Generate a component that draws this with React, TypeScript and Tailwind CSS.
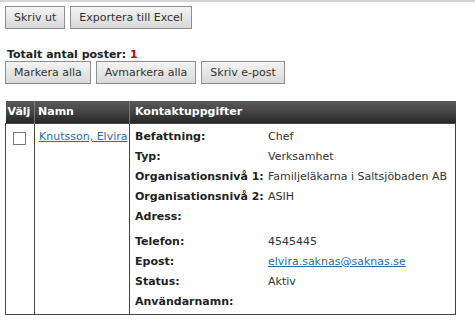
import React from 'react';

const font = { fontFamily: '"DejaVu Sans", Verdana, sans-serif' };

const Btn: React.FC<{ label: string }> = ({ label }) => (
    <button className="h-[23px] px-[8px] border border-[#8e8e8e] bg-gradient-to-b from-[#f4f4f4] to-[#d9d9d9] text-[11px] text-[#333] leading-none">
        {label}
    </button>
);

const rows: { label: string; value?: string; link?: boolean; gap?: boolean }[] = [
    { label: 'Befattning:', value: 'Chef' },
    { label: 'Typ:', value: 'Verksamhet' },
    { label: 'Organisationsnivå 1:', value: 'Familjeläkarna i Saltsjöbaden AB' },
    { label: 'Organisationsnivå 2:', value: 'ASIH' },
    { label: 'Adress:' },
    { label: 'Telefon:', value: '4545445', gap: true },
    { label: 'Epost:', value: 'elvira.saknas@saknas.se', link: true },
    { label: 'Status:', value: 'Aktiv' },
    { label: 'Användarnamn:' },
];

const App: React.FC = () => {
    return (
        <div className="w-[475px] h-[330px] bg-white text-[#222] border-t-2 border-[#d4d4d4]" style={font}>
            <div className="flex gap-[5px] pl-[5px] pt-[4px]">
                <Btn label="Skriv ut" />
                <Btn label="Exportera till Excel" />
            </div>

            <div className="pl-[7px] mt-[20px] text-[11px] font-bold leading-[12px]">
                Totalt antal poster: <span className="text-[#cc0000]">1</span>
            </div>
            <div className="flex gap-[5px] pl-[5px] mt-0">
                <Btn label="Markera alla" />
                <Btn label="Avmarkera alla" />
                <Btn label="Skriv e-post" />
            </div>

            <table className="ml-[5px] mt-[17px] w-[451px] border-collapse text-[11px]">
                <thead>
                    <tr className="h-[22px] text-white font-bold text-left bg-gradient-to-b from-[#5a5a5a] via-[#444] to-[#262626]">
                        <th className="w-[29px] pl-[2px] border-r border-[#777] font-bold">Välj</th>
                        <th className="w-[95px] pl-[3px] border-r border-[#777] font-bold">Namn</th>
                        <th className="pl-[5px] font-bold">Kontaktuppgifter</th>
                    </tr>
                </thead>
                <tbody>
                    <tr className="align-top">
                        <td className="border border-[#444] pt-[8px]">
                            <div className="ml-[7px] w-[13px] h-[13px] border border-[#777] bg-white" />
                        </td>
                        <td className="border border-[#444] pt-[5px] pl-[4px]">
                            <a className="text-[#2a6bb0] underline whitespace-nowrap">Knutsson, Elvira</a>
                        </td>
                        <td className="border border-[#444] pl-[5px] pt-[5px] pb-0">
                            {rows.map((r) => (
                                <div key={r.label} className={`flex h-[20px] items-start ${r.gap ? 'mt-[5px]' : ''}`}>
                                    <span className="w-[133px] font-bold whitespace-nowrap">{r.label}</span>
                                    {r.value && (
                                        <span className={r.link ? 'text-[#2a6bb0] underline' : 'text-[#333]'}>{r.value}</span>
                                    )}
                                </div>
                            ))}
                        </td>
                    </tr>
                </tbody>
            </table>
        </div>
    );
};

export default App;
